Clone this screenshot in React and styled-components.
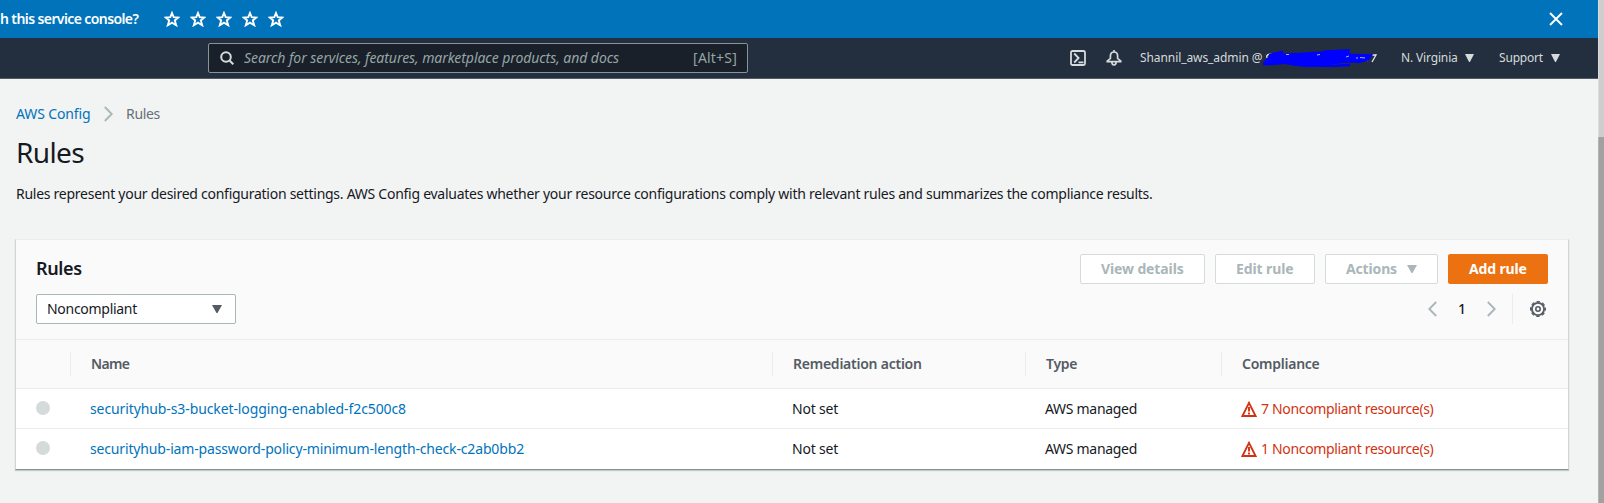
import React from "react";
import styled, { createGlobalStyle } from "styled-components";

const GlobalStyle = createGlobalStyle`
  *, *::before, *::after { box-sizing: border-box; }
  body {
    margin: 0;
    background: #f2f3f3;
    color: #16191f;
    font-family: "Noto Sans", "Open Sans", sans-serif;
    font-size: 14px;
    line-height: 22px;
    overflow: hidden;
  }
  svg { display: block; flex: none; }
`;

const Screen = styled.div`
  display: grid;
  grid-template-columns: 1598px 6px;
  width: 1604px;
  height: 503px;
`;

const Page = styled.div`
  min-width: 0;
  overflow: hidden;
`;

const Scrollbar = styled.div`
  background: #cdcdcd;
  border-left: 1px solid #dcdcdc;
  padding-top: 137px;
`;

const ScrollThumb = styled.div`
  height: 366px;
  margin-left: -1px;
  background: #a1a1a1;
  border-left: 1px solid #b4b4b4;
`;

const Label = styled.span`
  white-space: nowrap;
  letter-spacing: ${(p) => p.$track || 0}px;
`;

const FeedbackBar = styled.header`
  display: flex;
  align-items: center;
  height: 38px;
  padding-right: 35px;
  background: #0073bb;
  color: #fff;
`;

const FeedbackText = styled(Label)`
  width: 139px;
  font-weight: 600;
  padding-bottom: 1px;
`;

const Stars = styled.div`
  display: flex;
  flex: 1;
  gap: 10px;
  margin-left: 25px;
`;

const NavBar = styled.nav`
  display: flex;
  align-items: center;
  height: 41px;
  padding: 0 37px 0 208px;
  background: #232f3e;
  border-bottom: 1px solid #545b64;
  color: #d5dbdb;
  font-size: 12px;
`;

const SearchBox = styled.div`
  display: flex;
  align-items: center;
  width: 540px;
  height: 30px;
  padding: 0 10px 0 11px;
  background: #1a2029;
  border: 1px solid #879596;
  border-radius: 2px;
  color: #95a5a6;
  font-size: 14px;
`;

const Placeholder = styled(Label)`
  flex: 1;
  margin-left: 10px;
  font-style: italic;
`;

const NavTools = styled.div`
  display: flex;
  align-items: center;
  gap: 20px;
  margin-left: 322px;
`;

const Account = styled.div`
  display: flex;
  align-items: center;
  width: 236px;
  margin-left: 18px;
`;

const NavMenu = styled.div`
  display: flex;
  align-items: center;
  justify-content: space-between;
  width: ${(p) => p.$width}px;
  margin-left: 25px;
`;

const Content = styled.main`
  padding: 24px 29px 0 16px;
`;

const Breadcrumbs = styled.div`
  display: flex;
  align-items: center;
  color: #687078;
`;

const Crumb = styled(Label)`
  width: ${(p) => p.$width}px;
  color: ${(p) => (p.$link ? "#0073bb" : "#687078")};
`;

const CurrentCrumb = styled(Label)`
  margin-left: 13px;
`;

const Title = styled.h1`
  margin: 9px 0 0;
  font-size: 28px;
  font-weight: 400;
  line-height: 36px;
  letter-spacing: -0.63px;
`;

const Description = styled.p`
  margin: 13px 0 34px;
  white-space: nowrap;
  letter-spacing: -0.265px;
`;

const Card = styled.section`
  width: 1554px;
  margin-left: -1px;
  background: #fff;
  border: 1px solid #d0d5d5;
  border-top-color: #eaeded;
  border-bottom-color: #879596;
  box-shadow: 0 1px 1px rgba(0, 28, 36, 0.2);
`;

const CardHeader = styled.div`
  height: 99px;
  padding: 14px 20px 0;
  background: #fafafa;
`;

const HeaderRow = styled.div`
  display: flex;
  align-items: center;
  justify-content: space-between;
  height: 30px;
  margin-bottom: 10px;
`;

const CardTitle = styled.h2`
  margin: 0;
  padding-bottom: 2px;
  font-size: 18px;
  font-weight: 600;
  letter-spacing: -0.35px;
`;

const Actions = styled.div`
  display: flex;
  gap: 10px;
`;

const Button = styled.button`
  display: flex;
  align-items: center;
  justify-content: space-between;
  width: ${(p) => p.$width}px;
  height: 30px;
  padding: 0 ${(p) => (p.$primary ? 21 : 20)}px;
  border: ${(p) => (p.$primary ? "0" : "1px solid #d5dbdb")};
  border-radius: 2px;
  background: ${(p) => (p.$primary ? "#ec7211" : "#fff")};
  color: ${(p) => (p.$primary ? "#fff" : "#aab7b8")};
  font: 700 14px/22px "Noto Sans", "Open Sans", sans-serif;
`;

const Select = styled.div`
  display: flex;
  align-items: center;
  justify-content: space-between;
  width: 200px;
  height: 30px;
  padding: 0 13px 0 10px;
  background: #fff;
  border: 1px solid #aab7b8;
  border-radius: 2px;
`;

const Pagination = styled.div`
  display: flex;
  align-items: center;
  height: 30px;
`;

const PageNumber = styled.span`
  width: 50px;
  text-align: center;
  font-weight: 500;
`;

const Preferences = styled.div`
  display: flex;
  align-items: center;
  height: 30px;
  margin-left: 16px;
  padding-left: 17px;
  padding-right: 2px;
  border-left: 1px solid #eaeded;
`;

const columns = "54px 702px 253px 196px 1fr";

const TableHead = styled.div`
  display: grid;
  grid-template-columns: ${columns};
  align-items: center;
  height: 50px;
  background: #fafafa;
  border-top: 1px solid #eaeded;
  border-bottom: 1px solid #eaeded;
  color: #545b64;
  font-weight: 600;
`;

const HeadCell = styled.div`
  height: 24px;
  padding-left: 20px;
  line-height: 24px;
  border-left: ${(p) => (p.$first ? "0" : "1px solid #eaeded")};
`;

const TableRow = styled.div`
  display: grid;
  grid-template-columns: ${columns};
  height: 40px;
  border-bottom: ${(p) => (p.$last ? "0" : "1px solid #eaeded")};
`;

const Cell = styled.div`
  display: flex;
  align-items: center;
  padding: 0 0 0 20px;
  color: ${(p) => p.$color || "#16191f"};
`;

const Radio = styled.span`
  width: 14px;
  height: 14px;
  margin-bottom: 2px;
  border-radius: 50%;
  background: #d5dbdb;
`;

const Status = styled(Label)`
  margin-left: 4px;
`;

const Star = () => (
  <svg width="16" height="16" viewBox="0 0 16 16" fill="none" stroke="#fff" strokeWidth="1.9" strokeLinejoin="miter">
    <path d="M8 2l1.7 4.2 4.6.3-3.5 2.9 1.4 4.8L8 11.600l-4.200 2.600 1.400-4.800L1.700 6.500l4.600-.3z" />
  </svg>
);

const Close = () => (
  <svg width="14" height="14" viewBox="0 0 14 14" stroke="#fff" strokeWidth="1.9">
    <path d="M1 1l12 12M13 1L1 13" />
  </svg>
);

const SearchIcon = () => (
  <svg width="14" height="14" viewBox="0 0 14 14" fill="none" stroke="#d5dbdb" strokeWidth="2">
    <circle cx="6" cy="6" r="4.8" />
    <path d="M9.3 9.3l4 4" />
  </svg>
);

const ShellIcon = () => (
  <svg width="16" height="16" viewBox="0 0 16 16" fill="none" stroke="#d5dbdb" strokeWidth="1.8">
    <rect x="1" y="1" width="14" height="14" rx="1.5" />
    <path d="M4.2 3.5L8.6 8l-4.400 4.500M8.500 12.400h5" />
  </svg>
);

const BellIcon = () => (
  <svg width="16" height="16" viewBox="0 0 16 16" fill="none" stroke="#d5dbdb" strokeWidth="1.7" strokeLinejoin="round">
    <path d="M8 0v2M4.400 6c0-2.600 1.600-4 3.600-4s3.600 1.400 3.600 4v2.400l3.200 2.800v.5H1.200v-.5l3.200-2.800zM5.800 12.200c.2 1.900 1 2.800 2.200 2.800s2-.9 2.200-2.800" />
  </svg>
);

const Caret = ({ color = "#d5dbdb", w = 9, h = 8 }) => (
  <svg width={w} height={h} viewBox="0 0 10 8" preserveAspectRatio="none" fill={color}>
    <path d="M0 0h10L5.500 8h-1z" />
  </svg>
);

const Chevron = ({ left = false, w = 9 }) => (
  <svg width={w} height="16" viewBox="0 0 9 16" fill="none" stroke="#aab7b8" strokeWidth="1.9">
    <path d={left ? "M8.200 1L1.300 8l6.900 7" : "M.8 1l6.900 7L.8 15"} />
  </svg>
);

const Gear = () => (
  <svg width="16" height="16" viewBox="0 0 16 16" fill="none" stroke="#545b64">
    <circle cx="8" cy="8" r="6.1" strokeWidth="1.9" />
    <circle cx="8" cy="8" r="7.4" strokeWidth="1.2" strokeDasharray="3.5 2.312" strokeDashoffset="1.75" />
    <circle cx="8" cy="8" r="2.2" strokeWidth="1.6" />
  </svg>
);

const Warning = () => (
  <svg width="16" height="16" viewBox="0 0 16 16" fill="none" stroke="#d13212">
    <path d="M8 1.900L14.600 15H1.400z" strokeWidth="1.9" />
    <path d="M8 6v4.500M8 11.500v2" strokeWidth="1.9" />
  </svg>
);

const Redaction = () => (
  <svg width="114" height="18" viewBox="0 0 114 18" fill="none">
    <path d="M9 5.500c-4-1-6 1-5 3s5 .5 5 3M104 12l3-4.500M109 6h4l-4 7" stroke="#e4e8e8" strokeWidth="1.3" />
    <path
      d="M5 8l7-3.500L18 3l2 1.500L32 4l28-1.800 16-.7 9 1.500 4 2 13 .5 5 1.500-1 3.500-9 3-16 .5-20 2.500-28 .5-12-2-18 1.500-3-3z"
      fill="#0000ff"
    />
    <path
      d="M7 6l12-3M1 15l26-1.500M27 14l12 2.500 30 .5 17-1M62 2.500l24-1M90 6l18 .5-3 4-10 2.500"
      stroke="#0000ff"
      strokeWidth="2.4"
      strokeLinecap="round"
    />
    <path d="M23 5.500h3M54 6l3-.5M83 8l3-1M93 9h2M97 8.500l5 .5" stroke="#9fb4e8" strokeWidth="1" />
  </svg>
);

const RULES = [
  { name: "securityhub-s3-bucket-logging-enabled-f2c500c8", track: -0.103, status: "7 Noncompliant resource(s)" },
  { name: "securityhub-iam-password-policy-minimum-length-check-c2ab0bb2", track: -0.154, status: "1 Noncompliant resource(s)" },
];

export default function App() {
  return (
    <Screen>
      <GlobalStyle />
      <Page>
        <FeedbackBar>
          <FeedbackText $track={-0.6}>h this service console?</FeedbackText>
          <Stars>
            {[1, 2, 3, 4, 5].map((n) => (
              <Star key={n} />
            ))}
          </Stars>
          <Close />
        </FeedbackBar>
        <NavBar>
          <SearchBox>
            <SearchIcon />
            <Placeholder $track={-0.059}>Search for services, features, marketplace products, and docs</Placeholder>
            <Label $track={0.2}>[Alt+S]</Label>
          </SearchBox>
          <NavTools>
            <ShellIcon />
            <BellIcon />
          </NavTools>
          <Account>
            <Label $track={-0.08}>Shannil_aws_admin @</Label>
            <Redaction />
          </Account>
          <NavMenu $width={73}>
            <Label $track={-0.15}>N. Virginia</Label>
            <Caret />
          </NavMenu>
          <NavMenu $width={61}>
            <Label $track={-0.187}>Support</Label>
            <Caret />
          </NavMenu>
        </NavBar>
        <Content>
          <Breadcrumbs>
            <Crumb $link $width={88} $track={-0.124}>AWS Config</Crumb>
            <Chevron />
            <CurrentCrumb $track={-0.315}>Rules</CurrentCrumb>
          </Breadcrumbs>
          <Title>Rules</Title>
          <Description>
            Rules represent your desired configuration settings. AWS Config evaluates whether your resource
            configurations comply with relevant rules and summarizes the compliance results.
          </Description>
          <Card>
            <CardHeader>
              <HeaderRow>
                <CardTitle>Rules</CardTitle>
                <Actions>
                  <Button $width={125}><Label $track={-0.12}>View details</Label></Button>
                  <Button $width={100}><Label $track={-0.1}>Edit rule</Label></Button>
                  <Button $width={113}>
                    <Label $track={-0.15}>Actions</Label>
                    <Caret color="#aab7b8" w={10} />
                  </Button>
                  <Button $primary $width={100}><Label $track={-0.15}>Add rule</Label></Button>
                </Actions>
              </HeaderRow>
              <HeaderRow>
                <Select>
                  <Label $track={-0.286}>Noncompliant</Label>
                  <Caret color="#545b64" w={10} />
                </Select>
                <Pagination>
                  <Chevron left />
                  <PageNumber>1</PageNumber>
                  <Chevron />
                  <Preferences><Gear /></Preferences>
                </Pagination>
              </HeaderRow>
            </CardHeader>
            <TableHead>
              <HeadCell $first />
              <HeadCell><Label $track={-0.7}>Name</Label></HeadCell>
              <HeadCell><Label $track={-0.24}>Remediation action</Label></HeadCell>
              <HeadCell><Label $track={-0.3}>Type</Label></HeadCell>
              <HeadCell><Label $track={-0.25}>Compliance</Label></HeadCell>
            </TableHead>
            {RULES.map((rule, i) => (
              <TableRow key={rule.name} $last={i === RULES.length - 1}>
                <Cell><Radio /></Cell>
                <Cell $color="#0073bb"><Label $track={rule.track}>{rule.name}</Label></Cell>
                <Cell><Label $track={-0.209}>Not set</Label></Cell>
                <Cell><Label $track={-0.3}>AWS managed</Label></Cell>
                <Cell $color="#d13212">
                  <Warning />
                  <Status $track={-0.334}>{rule.status}</Status>
                </Cell>
              </TableRow>
            ))}
          </Card>
        </Content>
      </Page>
      <Scrollbar>
        <ScrollThumb />
      </Scrollbar>
    </Screen>
  );
}
